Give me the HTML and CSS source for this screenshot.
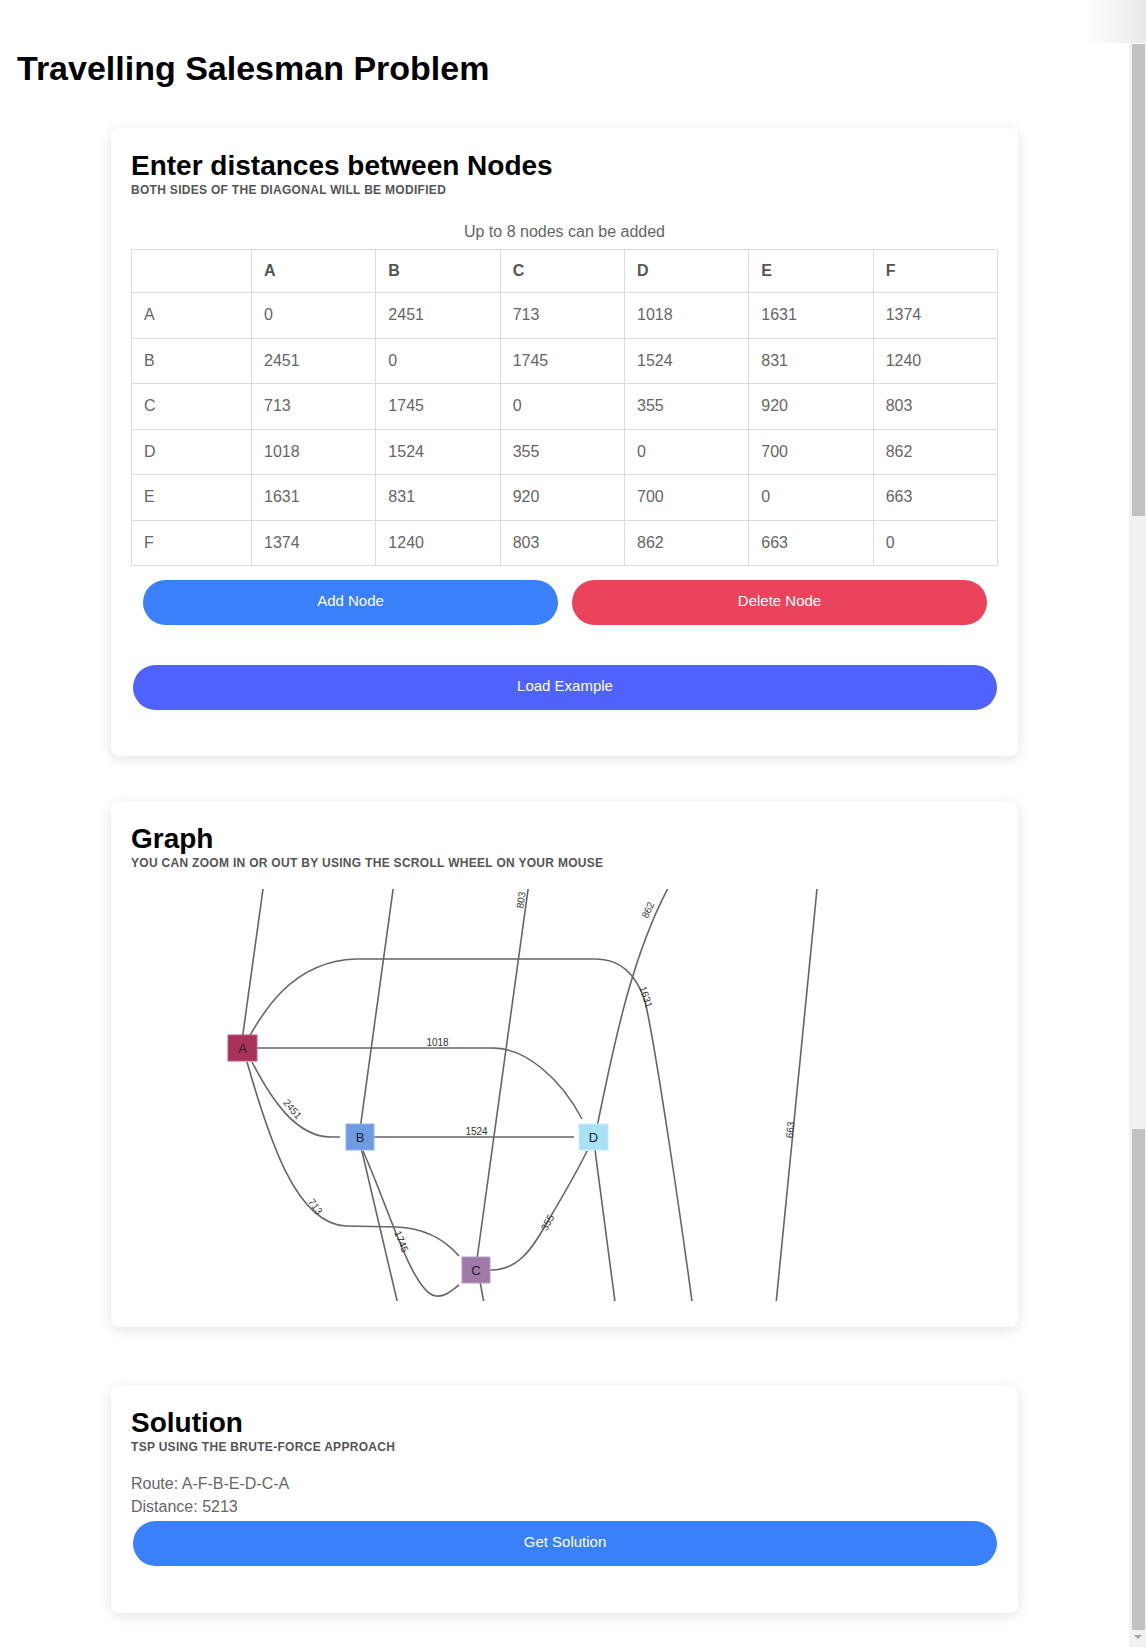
FILE: index.html
```html
<!DOCTYPE html>
<html lang="en">
<head>
<meta charset="utf-8">
<title>Travelling Salesman Problem</title>
<link rel="stylesheet" href="styles.css">
</head>
<body>
<div class="topbar"><div class="fade"></div></div>
<div class="frame">
  <div class="page">
    <h1 class="title">Travelling Salesman Problem</h1>

    <section class="card card-matrix">
      <h2 class="card-title">Enter distances between Nodes</h2>
      <div class="card-sub">Both sides of the diagonal will be modified</div>
      <div class="note">Up to 8 nodes can be added</div>
      <table class="matrix">
        <colgroup><col class="c0"><col><col><col><col><col><col></colgroup>
        <thead>
          <tr><th></th><th>A</th><th>B</th><th>C</th><th>D</th><th>E</th><th>F</th></tr>
        </thead>
        <tbody>
          <tr><td>A</td><td>0</td><td>2451</td><td>713</td><td>1018</td><td>1631</td><td>1374</td></tr>
          <tr><td>B</td><td>2451</td><td>0</td><td>1745</td><td>1524</td><td>831</td><td>1240</td></tr>
          <tr><td>C</td><td>713</td><td>1745</td><td>0</td><td>355</td><td>920</td><td>803</td></tr>
          <tr><td>D</td><td>1018</td><td>1524</td><td>355</td><td>0</td><td>700</td><td>862</td></tr>
          <tr><td>E</td><td>1631</td><td>831</td><td>920</td><td>700</td><td>0</td><td>663</td></tr>
          <tr><td>F</td><td>1374</td><td>1240</td><td>803</td><td>862</td><td>663</td><td>0</td></tr>
        </tbody>
      </table>
      <div class="btn-row">
        <button class="btn btn-blue">Add Node</button>
        <button class="btn btn-red">Delete Node</button>
      </div>
      <button class="btn btn-indigo btn-wide btn-load">Load Example</button>
    </section>

    <section class="card card-graph">
      <h2 class="card-title">Graph</h2>
      <div class="card-sub">You can zoom in or out by using the scroll wheel on your mouse</div>
      <svg class="graph" width="867" height="412" viewBox="0 0 867 412">
        <g class="edges">
          <path d="M110 159 L132.7 -5"/>
          <path d="M228 248 L263.5 -10"/>
          <path d="M344.5 381 L398.5 -10"/>
          <path d="M347 381 L354 420"/>
          <path d="M227.6 248 L268 420"/>
          <path d="M462.3 248 L485.6 425"/>
          <path d="M464 248 C480 170, 500 60, 545 -15"/>
          <path d="M686.5 -5 L644.5 420"/>
          <path d="M112 159 C130 125, 160 72, 225 70 L465 70 C490 70, 505 85, 514 112 C525 160, 550 330, 562 420"/>
          <path d="M126 159 L362 159 C395 159, 430 190, 451 230"/>
          <path d="M121 173 C140 210, 165 248, 200 248 L209 248"/>
          <path d="M242 248 L443 248"/>
          <path d="M116 173 C138 250, 165 335, 215 337 L265 338 C295 339, 315 352, 328 367"/>
          <path d="M232 262 C258 320, 282 405, 305 407 C314 408, 320 402, 328 396"/>
          <path d="M359 381 C385 382, 400 362, 414 337 C430 310, 445 285, 456 262"/>
        </g>
        <g class="elabels">
          <text transform="translate(390 11) rotate(-82)">803</text>
          <text transform="translate(517 21) rotate(-66)">862</text>
          <text transform="translate(515 108) rotate(72)">1631</text>
          <text transform="translate(659 241) rotate(-85)">663</text>
          <text transform="translate(306.5 153.5)">1018</text>
          <text transform="translate(345.5 242)">1524</text>
          <text transform="translate(161.5 220) rotate(50)">2451</text>
          <text transform="translate(184.5 317.5) rotate(55)">713</text>
          <text transform="translate(270.5 352.5) rotate(68)">1745</text>
          <text transform="translate(416.5 333.5) rotate(-62)">355</text>
        </g>
        <g class="nodes">
          <rect class="n-a" x="97" y="146" width="29" height="26"/>
          <rect class="n-b" x="215" y="235" width="28" height="26"/>
          <rect class="n-d" x="448" y="235" width="29" height="26"/>
          <rect class="n-c" x="331" y="368" width="28" height="26"/>
          <text x="111.5" y="159">A</text>
          <text x="229" y="248">B</text>
          <text x="462.5" y="248">D</text>
          <text x="345" y="381">C</text>
        </g>
      </svg>
    </section>

    <section class="card card-solution">
      <h2 class="card-title">Solution</h2>
      <div class="card-sub">TSP using the brute-force approach</div>
      <div class="result">
        <div>Route: A-F-B-E-D-C-A</div>
        <div>Distance: 5213</div>
      </div>
      <button class="btn btn-blue btn-wide btn-solve">Get Solution</button>
    </section>
  </div>
  <div class="scrollbar">
    <div class="thumb thumb-top"></div>
    <div class="track-gap"></div>
    <div class="thumb thumb-bottom"></div>
    <div class="arrow"></div>
  </div>
</div>
</body>
</html>
```

FILE: styles.css
```css
html, body {
  margin: 0;
  padding: 0;
  background: #ffffff;
}

body {
  font-family: "Liberation Sans", Arial, sans-serif;
  color: #000;
  overflow: hidden;
  width: 1146px;
  height: 1647px;
}

.topbar {
  height: 44px;
  display: flex;
  justify-content: flex-end;
}

.fade {
  width: 62px;
  height: 43px;
  background: linear-gradient(to right, rgba(234, 234, 234, 0), #e9e9e9);
}

.frame {
  display: flex;
  height: 1603px;
}

.page {
  flex: 1;
  min-width: 0;
}

.title {
  margin: 5px 0 0 17px;
  font-size: 34px;
  line-height: 39px;
  font-weight: bold;
}

.card {
  width: 907px;
  box-sizing: border-box;
  margin: 0 auto;
  background: #fff;
  border-radius: 8px;
  box-shadow: 0 3px 14px rgba(0, 0, 0, 0.11);
  padding: 22px 20px 46px;
}

.card-matrix { margin-top: 40px; padding-bottom: 46px; }
.card-graph { margin-top: 45px; padding-bottom: 26px; }
.card-solution { margin-top: 58px; padding-bottom: 47px; }

.card-title {
  margin: 0;
  font-size: 28px;
  line-height: 32px;
  font-weight: bold;
}

.card-sub {
  margin-top: 1px;
  font-size: 12px;
  line-height: 14px;
  font-weight: bold;
  text-transform: uppercase;
  letter-spacing: 0.3px;
  color: #555;
}

.note {
  margin-top: 26px;
  text-align: center;
  font-size: 16px;
  line-height: 18px;
  color: #666;
}

.matrix {
  margin-top: 8px;
  width: 867px;
  border-collapse: collapse;
  table-layout: fixed;
  font-size: 16px;
  color: #666;
}

.matrix col.c0 { width: 120px; }

.matrix th,
.matrix td {
  border: 1px solid #dcdcdc;
  text-align: left;
  padding: 12px 12px;
}

.matrix th {
  line-height: 18px;
  font-weight: bold;
  color: #555;
}

.matrix td {
  line-height: 20.5px;
}

.btn {
  display: block;
  height: 45px;
  border: none;
  border-radius: 23px;
  color: #fff;
  font-family: "Liberation Sans", Arial, sans-serif;
  font-size: 15px;
  line-height: 42px;
  padding: 0 0 3px;
  cursor: pointer;
}

.btn-blue { background: #3a80fb; }
.btn-red { background: #ea435b; }
.btn-indigo { background: #5062fe; }

.btn-row {
  margin-top: 14px;
  display: flex;
  gap: 14px;
  padding: 0 11px 0 12px;
}

.btn-row .btn { flex: 1; }

.btn-wide {
  width: 864px;
  margin-left: 2px;
}

.btn-load { margin-top: 40px; }

.graph {
  display: block;
  margin-top: 19px;
  overflow: hidden;
}

.edges path {
  fill: none;
  stroke: #656565;
  stroke-width: 1.6;
}

.elabels text {
  font-family: "Liberation Sans", Arial, sans-serif;
  font-size: 10px;
  fill: #333;
  text-anchor: middle;
  dominant-baseline: central;
}

.nodes rect { stroke-width: 1; }
.nodes .n-a { fill: #a9325a; stroke: #c25a7c; }
.nodes .n-b { fill: #6e9ce2; stroke: #92b6ec; }
.nodes .n-c { fill: #9e7aa9; stroke: #b89cc1; }
.nodes .n-d { fill: #a8e0f5; stroke: #c6ecf9; }

.nodes text {
  font-family: "Liberation Sans", Arial, sans-serif;
  font-size: 13px;
  fill: #222;
  text-anchor: middle;
  dominant-baseline: central;
}

.result {
  margin-top: 18px;
  font-size: 16px;
  line-height: 23px;
  color: #666;
}

.btn-solve { margin-top: 3px; }

.scrollbar {
  width: 17px;
  background: #f1f1f1;
  display: flex;
  flex-direction: column;
  align-items: center;
  padding-left: 1px;
  box-sizing: border-box;
}

.thumb {
  width: 13px;
  background: #c1c1c1;
}

.thumb-top { height: 472px; }
.track-gap { height: 613px; }
.thumb-bottom { height: 501px; }

.arrow {
  width: 0;
  height: 0;
  margin-top: 5px;
  border-left: 4px solid transparent;
  border-right: 4px solid transparent;
  border-top: 4px solid #a3a3a3;
}
```
